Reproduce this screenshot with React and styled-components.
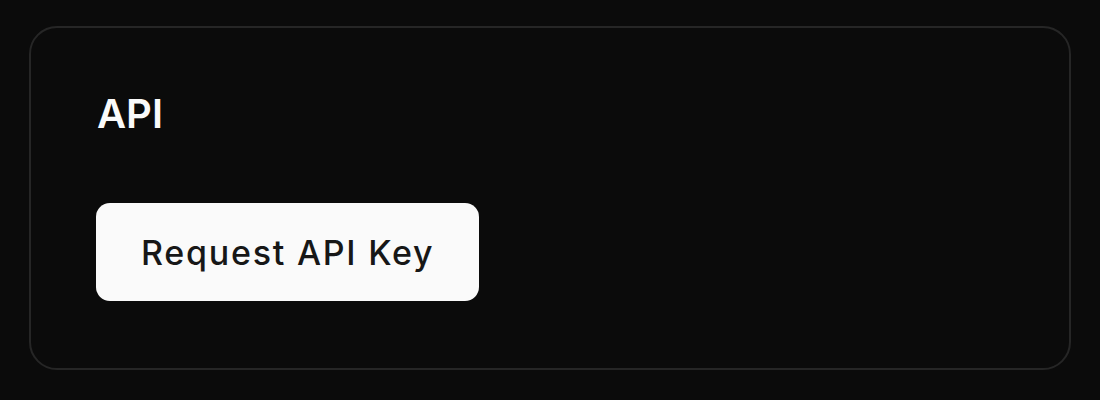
import React from "react";
import styled, { createGlobalStyle } from "styled-components";

const Global = createGlobalStyle`
  html, body { margin: 0; padding: 0; background: #0b0b0b; }
  body { font-family: Inter, "Noto Sans", sans-serif; -webkit-font-smoothing: antialiased; }
  * { box-sizing: border-box; }
`;

const Page = styled.div`
  width: 1100px;
  height: 400px;
  padding: 26px 29px 30px 29px;
`;

const Card = styled.section`
  height: 344px;
  border: 2px solid #262626;
  border-radius: 28px;
  background: #0b0b0b;
  padding: 62px 66px;
  display: flex;
  flex-direction: column;
  align-items: flex-start;
  gap: 65px;
`;

const Title = styled.h2`
  margin: 0;
  color: #fafafa;
  font-size: 40px;
  line-height: 48px;
  font-weight: 600;
  letter-spacing: 0px;
`;

const Button = styled.button`
  height: 98px;
  margin-left: -1px;
  padding: 0 45px;
  border: none;
  border-radius: 14px;
  background: #fafafa;
  color: #171717;
  font-family: inherit;
  font-size: 34px;
  font-weight: 500;
  letter-spacing: 1.75px;
  cursor: pointer;
`;

export default function App() {
  return (
    <>
      <Global />
      <Page>
        <Card>
          <Title>API</Title>
          <Button>Request API Key</Button>
        </Card>
      </Page>
    </>
  );
}
